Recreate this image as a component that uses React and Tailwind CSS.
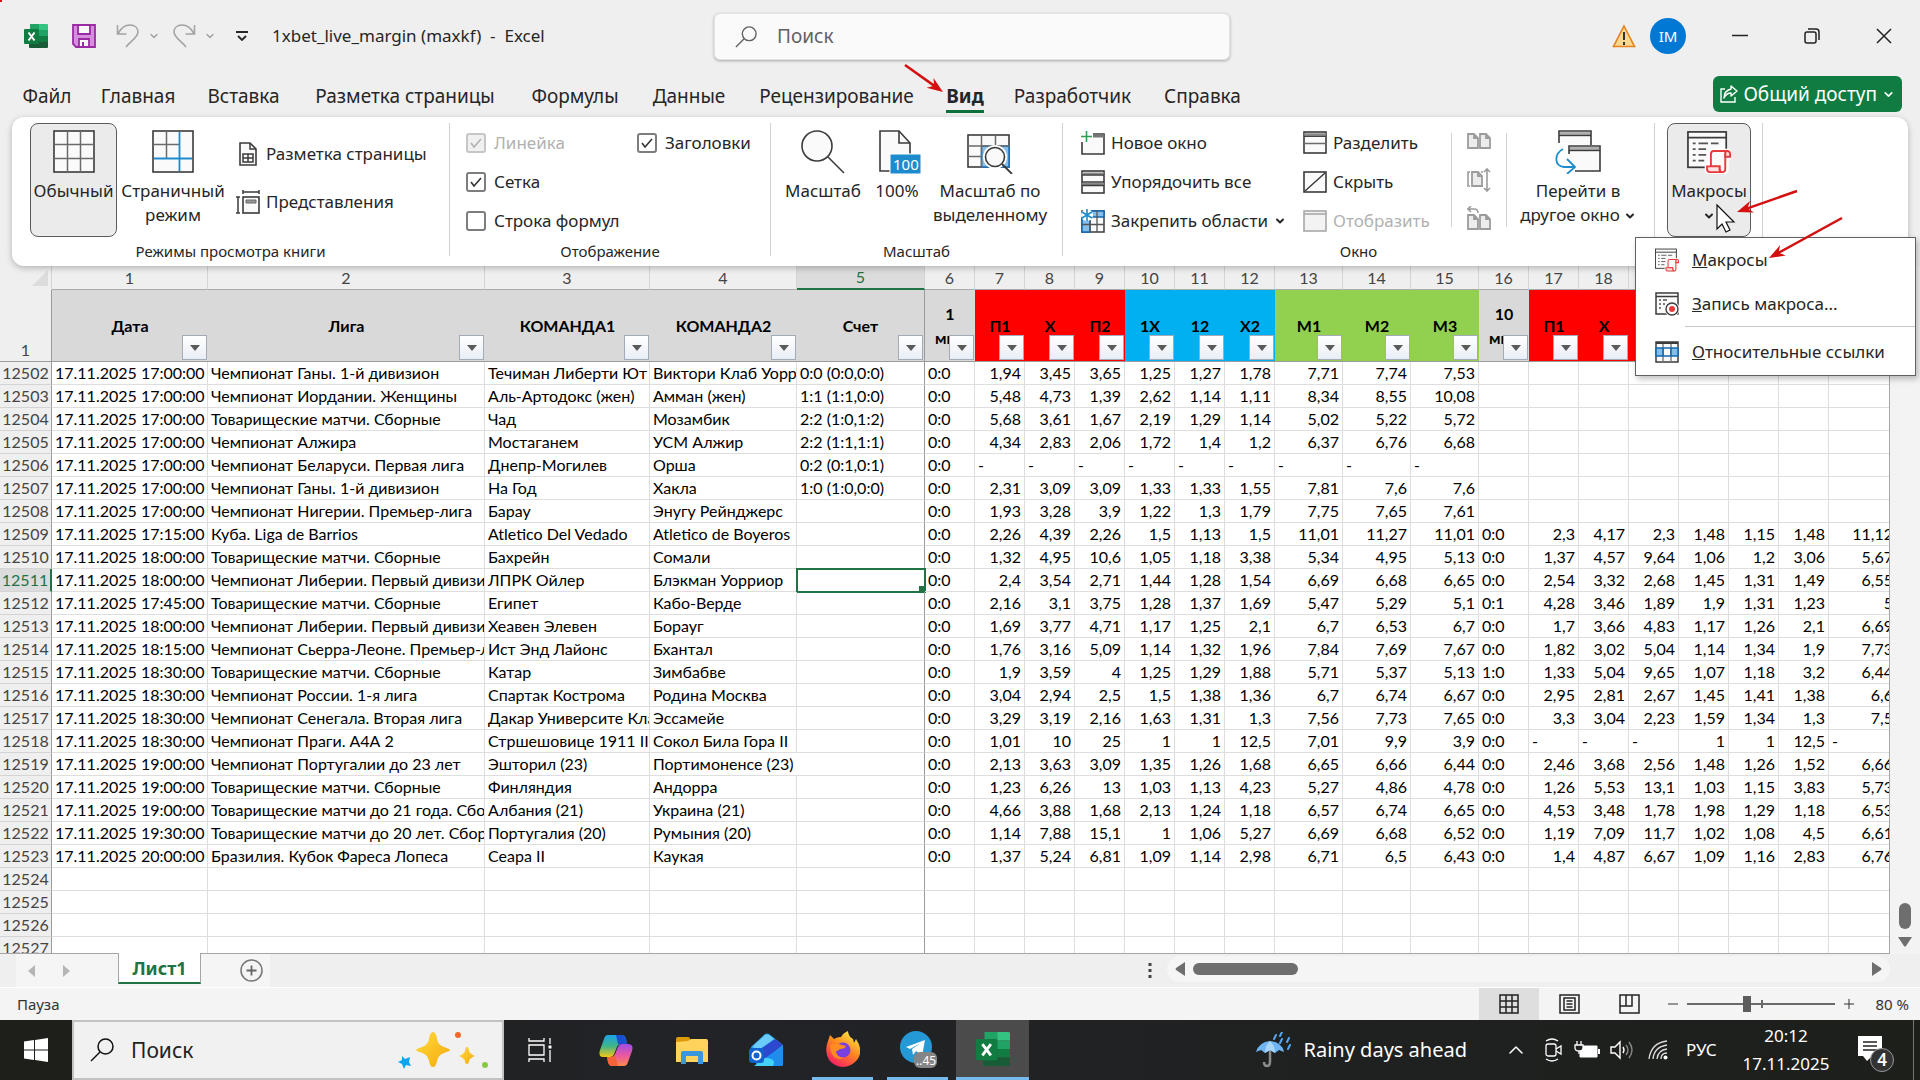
import React, { useState } from "react";
import { ChevronDown, ChevronUp, Minus, Plus } from "lucide-react";

const TABS = ["Файл", "Главная", "Вставка", "Разметка страницы", "Формулы", "Данные", "Рецензирование", "Вид", "Разработчик", "Справка"]

const COLS = [156, 277, 165, 147, 128, 50, 50, 50, 50, 50, 50, 50, 68, 68, 68, 50, 50, 50, 50, 50, 50, 50, 68]

const GREY = "bg-[#d9d9d9]"
const RED = "bg-[#ff0000]"
const BLUE = "bg-[#00b0f0]"
const LIME = "bg-[#92d050]"

const HEADERS = [
  ["Дата", GREY], ["Лига", GREY], ["КОМАНДА1", GREY], ["КОМАНДА2", GREY], ["Счет", GREY], ["1 мин", GREY],
  ["П1", RED], ["X", RED], ["П2", RED], ["1X", BLUE], ["12", BLUE], ["X2", BLUE],
  ["М1", LIME], ["М2", LIME], ["М3", LIME], ["10 мин", GREY],
  ["П1", RED], ["X", RED], ["П2", RED], ["1X", BLUE], ["12", BLUE], ["X2", BLUE], ["М1", LIME],
]

const FIRST_ROW = 12502
const ACTIVE_ROW = 12511

const DATA = `17:00:00|Чемпионат Ганы. 1-й дивизион|Течиман Либерти Ют|Виктори Клаб Уорриорз|0:0 (0:0,0:0)|0:0|1,94|3,45|3,65|1,25|1,27|1,78|7,71|7,74|7,53
17:00:00|Чемпионат Иордании. Женщины|Аль-Артодокс (жен)|Амман (жен)|1:1 (1:1,0:0)|0:0|5,48|4,73|1,39|2,62|1,14|1,11|8,34|8,55|10,08
17:00:00|Товарищеские матчи. Сборные|Чад|Мозамбик|2:2 (1:0,1:2)|0:0|5,68|3,61|1,67|2,19|1,29|1,14|5,02|5,22|5,72
17:00:00|Чемпионат Алжира|Мостаганем|УСМ Алжир|2:2 (1:1,1:1)|0:0|4,34|2,83|2,06|1,72|1,4|1,2|6,37|6,76|6,68
17:00:00|Чемпионат Беларуси. Первая лига|Днепр-Могилев|Орша|0:2 (0:1,0:1)|0:0|-|-|-|-|-|-|-|-|-
17:00:00|Чемпионат Ганы. 1-й дивизион|На Год|Хакла|1:0 (1:0,0:0)|0:0|2,31|3,09|3,09|1,33|1,33|1,55|7,81|7,6|7,6
17:00:00|Чемпионат Нигерии. Премьер-лига|Барау|Энугу Рейнджерс||0:0|1,93|3,28|3,9|1,22|1,3|1,79|7,75|7,65|7,61
17:15:00|Куба. Liga de Barrios|Atletico Del Vedado|Atletico de Boyeros||0:0|2,26|4,39|2,26|1,5|1,13|1,5|11,01|11,27|11,01|0:0|2,3|4,17|2,3|1,48|1,15|1,48|11,12
18:00:00|Товарищеские матчи. Сборные|Бахрейн|Сомали||0:0|1,32|4,95|10,6|1,05|1,18|3,38|5,34|4,95|5,13|0:0|1,37|4,57|9,64|1,06|1,2|3,06|5,67
18:00:00|Чемпионат Либерии. Первый дивизион|ЛПРК Ойлер|Блэкман Уорриор||0:0|2,4|3,54|2,71|1,44|1,28|1,54|6,69|6,68|6,65|0:0|2,54|3,32|2,68|1,45|1,31|1,49|6,55
17:45:00|Товарищеские матчи. Сборные|Египет|Кабо-Верде||0:0|2,16|3,1|3,75|1,28|1,37|1,69|5,47|5,29|5,1|0:1|4,28|3,46|1,89|1,9|1,31|1,23|5
18:00:00|Чемпионат Либерии. Первый дивизион|Хеавен Элевен|Борауг||0:0|1,69|3,77|4,71|1,17|1,25|2,1|6,7|6,53|6,7|0:0|1,7|3,66|4,83|1,17|1,26|2,1|6,69
18:15:00|Чемпионат Сьерра-Леоне. Премьер-лига|Ист Энд Лайонс|Бхантал||0:0|1,76|3,16|5,09|1,14|1,32|1,96|7,84|7,69|7,67|0:0|1,82|3,02|5,04|1,14|1,34|1,9|7,73
18:30:00|Товарищеские матчи. Сборные|Катар|Зимбабве||0:0|1,9|3,59|4|1,25|1,29|1,88|5,71|5,37|5,13|1:0|1,33|5,04|9,65|1,07|1,18|3,2|6,44
18:30:00|Чемпионат России. 1-я лига|Спартак Кострома|Родина Москва||0:0|3,04|2,94|2,5|1,5|1,38|1,36|6,7|6,74|6,67|0:0|2,95|2,81|2,67|1,45|1,41|1,38|6,6
18:30:00|Чемпионат Сенегала. Вторая лига|Дакар Университе Клаб|Эссамейе||0:0|3,29|3,19|2,16|1,63|1,31|1,3|7,56|7,73|7,65|0:0|3,3|3,04|2,23|1,59|1,34|1,3|7,5
18:30:00|Чемпионат Праги. А4А 2|Стршешовице 1911 II|Сокол Била Гора II||0:0|1,01|10|25|1|1|12,5|7,01|9,9|3,9|0:0|-|-|-|1|1|12,5|-
19:00:00|Чемпионат Португалии до 23 лет|Эшторил (23)|Портимоненсе (23)||0:0|2,13|3,63|3,09|1,35|1,26|1,68|6,65|6,66|6,44|0:0|2,46|3,68|2,56|1,48|1,26|1,52|6,66
19:00:00|Товарищеские матчи. Сборные|Финляндия|Андорра||0:0|1,23|6,26|13|1,03|1,13|4,23|5,27|4,86|4,78|0:0|1,26|5,53|13,1|1,03|1,15|3,83|5,73
19:00:00|Товарищеские матчи до 21 года. Сборные|Албания (21)|Украина (21)||0:0|4,66|3,88|1,68|2,13|1,24|1,18|6,57|6,74|6,65|0:0|4,53|3,48|1,78|1,98|1,29|1,18|6,53
19:30:00|Товарищеские матчи до 20 лет. Сборные|Португалия (20)|Румыния (20)||0:0|1,14|7,88|15,1|1|1,06|5,27|6,69|6,68|6,52|0:0|1,19|7,09|11,7|1,02|1,08|4,5|6,61
20:00:00|Бразилия. Кубок Фареса Лопеса|Сеара II|Каукая||0:0|1,37|5,24|6,81|1,09|1,14|2,98|6,71|6,5|6,43|0:0|1,4|4,87|6,67|1,09|1,16|2,83|6,76`

const ROWS = DATA.split("\n").map((line) => ("17.11.2025 " + line).split("|"))
const EMPTY_ROWS = [[], [], [], []]

const Svg = ({ w, h, children, className = "" }) => (
  <svg width={w} height={h} viewBox={`0 0 ${w} ${h}`} fill="none" className={`shrink-0 ${className}`} aria-hidden="true">
    {children}
  </svg>
)

function ExcelLogo({ size }) {
  return (
    <svg width={size} height={size} viewBox="0 0 24 24" className="shrink-0" aria-hidden="true">
      <path d="M6 0h9v6H6z" fill="#21a366" />
      <path d="M15 0h8a1 1 0 0 1 1 1v5h-9z" fill="#33c481" />
      <path d="M5 6h10v6H5z" fill="#107c41" />
      <path d="M15 6h9v6h-9z" fill="#21a366" />
      <path d="M5 12h10v6H5z" fill="#185c37" />
      <path d="M15 12h9v6h-9z" fill="#107c41" />
      <path d="M5 18h19v5a1 1 0 0 1-1 1H6a1 1 0 0 1-1-1z" fill="#185c37" />
      <rect x="0" y="5" width="15" height="15" rx="1" fill="#107c41" />
      <path d="M4.500 8.500l6 8M10.500 8.500l-6 8" stroke="#fff" strokeWidth="2" />
    </svg>
  )
}

const SearchIcon = ({ size, stroke }) => (
  <svg width={size} height={size} viewBox="0 0 24 24" fill="none" stroke={stroke} strokeWidth="1.500" className="shrink-0" aria-hidden="true">
    <circle cx="15.500" cy="8.500" r="7.500" />
    <path d="M10 14L1 23" />
  </svg>
)

function TitleBar() {
  return (
    <header className="flex h-[74px] items-start justify-between">
      <div className="flex h-[72px] flex-1 items-center pl-6">
        <ExcelLogo size={24} />
        <button aria-label="Сохранить" className="ml-6">
          <Svg w={24} h={24}>
            <path d="M1 1h22v22H4l-3-3z" fill="#d58fdc" stroke="#9a2ba5" strokeWidth="1.800" />
            <path d="M6 1h12v9H6zM7 15h10v8H7z" fill="#fafafa" stroke="#9a2ba5" strokeWidth="1.800" />
            <path d="M11 18v5" stroke="#9a2ba5" strokeWidth="2" />
          </Svg>
        </button>
        <button aria-label="Отменить" className="ml-5 flex items-center gap-2 text-[#a3a3a3]">
          <Svg w={24} h={24}>
            <path d="M1.500 1v9h9M2 9.500C5 4 9 1 14 1c5 0 8 3 8 7 0 5-6 8-12 15" stroke="currentColor" strokeWidth="1.600" />
          </Svg>
          <ChevronDown size={12} strokeWidth={3} />
        </button>
        <button aria-label="Вернуть" className="ml-3 flex items-center gap-2 text-[#a3a3a3]">
          <Svg w={24} h={24}>
            <path d="M22.500 1v9h-9M22 9.500C19 4 15 1 10 1 5 1 2 4 2 8c0 5 6 8 12 15" stroke="currentColor" strokeWidth="1.600" />
          </Svg>
          <ChevronDown size={12} strokeWidth={3} />
        </button>
        <button aria-label="Настройка панели" className="ml-5">
          <Svg w={12} h={10}>
            <path d="M0 1h12M2 5l4 4 4-4" stroke="#262626" strokeWidth="1.800" />
          </Svg>
        </button>
        <h1 className="ml-6 whitespace-pre text-[17px] text-[#262626]">1xbet_live_margin (maxkf)  -  Excel</h1>
      </div>
      <label className="ml-7 mt-[13px] flex h-[47px] w-[516px] items-center gap-5 rounded-md border border-[#e2e2e2] bg-[#fafafa] px-5 shadow-[0_1px_3px_rgba(0,0,0,0.3)]">
        <SearchIcon size={22} stroke="#616161" />
        <input aria-label="Поиск" placeholder="Поиск" className="flex-1 bg-transparent text-[19px] outline-none placeholder:text-[#616161]" />
      </label>
      <div className="flex h-[72px] flex-1 items-center justify-end pr-7">
        <Svg w={24} h={24}>
          <path d="M12 2l10.500 20.500h-21z" fill="#fbd88f" stroke="#e8821e" strokeWidth="1.600" />
          <path d="M12 8v8M12 18v3" stroke="#333" strokeWidth="2" />
        </Svg>
        <button className="ml-[14px] h-9 w-9 rounded-full bg-[#0078d4] text-[15px] text-white">IM</button>
        <button aria-label="Свернуть" className="ml-[46px]">
          <Svg w={16} h={16}><path d="M0 7.500h16" stroke="#222" strokeWidth="1.500" /></Svg>
        </button>
        <button aria-label="Восстановить" className="ml-14">
          <Svg w={16} h={16}>
            <rect x="1" y="4" width="11" height="11" rx="2" stroke="#222" strokeWidth="1.500" />
            <path d="M4 1h8a3 3 0 0 1 3 3v8" stroke="#222" strokeWidth="1.500" />
          </Svg>
        </button>
        <button aria-label="Закрыть" className="ml-14">
          <Svg w={16} h={16}><path d="M1 1l14 14M15 1L1 15" stroke="#222" strokeWidth="1.500" /></Svg>
        </button>
      </div>
    </header>
  )
}

function Arrow({ w, h, x1, y1, x2, y2, className }) {
  const a = Math.atan2(y2 - y1, x2 - x1)
  const pt = (d, s) => `${x2 - d * Math.cos(a + s)},${y2 - d * Math.sin(a + s)}`
  return (
    <svg width={w} height={h} className={`pointer-events-none absolute z-30 ${className}`} aria-hidden="true">
      <line x1={x1} y1={y1} x2={x2 - 8 * Math.cos(a)} y2={y2 - 8 * Math.sin(a)} stroke="#d40f0f" strokeWidth="2.500" />
      <polygon points={`${x2},${y2} ${pt(17, 0.36)} ${pt(11, 0)} ${pt(17, -0.36)}`} fill="#d40f0f" />
    </svg>
  )
}

function MenuTabs() {
  return (
    <nav className="flex h-[43px] items-start justify-between pl-[7px] pr-[18px]">
      <div className="grid grid-cols-[80px_102px_109px_214px_126px_102px_193px_64px_151px_109px] text-[19px] text-[#262626]">
        {TABS.map((tab) => (
          <button key={tab} className="relative flex justify-center whitespace-nowrap pt-2 leading-7">
            {tab === "Вид" ? (
              <>
                <span className="border-b-[3px] border-[#0f703b] font-bold">{tab}</span>
                <Arrow w={44} h={34} x1={4} y1={3} x2={42} y2={30} className="-left-8 -top-3" />
              </>
            ) : tab}
          </button>
        ))}
      </div>
      <button className="mt-[2px] flex h-9 items-center gap-[5px] rounded-md bg-[#107c41] px-[7px] text-[19px] text-white">
        <Svg w={18} h={18}>
          <path d="M5 4H1v13h14v-5" stroke="#fff" strokeWidth="1.400" />
          <path d="M11 1l6 5-6 5V8C8 8 6 9 4 13c0-5 3-8 7-9z" stroke="#fff" strokeWidth="1.400" strokeLinejoin="round" />
        </Svg>
        Общий доступ
        <ChevronDown size={13} strokeWidth={3} />
      </button>
    </nav>
  )
}

const LINE = "#3b3b3b"

const NormalIcon = () => (
  <Svg w={44} h={44}>
    <rect x="2" y="1" width="40" height="41" fill="#fafafa" stroke={LINE} strokeWidth="1.600" />
    <path d="M15.500 1v41M28.500 1v41M2 14.500h40M2 28.500h40" stroke="#6b6b6b" strokeWidth="1.500" />
  </Svg>
)

const PageBreakIcon = () => (
  <Svg w={44} h={44}>
    <rect x="2" y="1" width="40" height="41" fill="#fafafa" stroke={LINE} strokeWidth="1.600" />
    <path d="M15.500 1v27M2 14.500h26" stroke="#6b6b6b" strokeWidth="1.500" />
    <path d="M28.500 2v39M3 28.500h38" stroke="#1e8bcd" strokeWidth="1.800" />
  </Svg>
)

const PageLayoutIcon = () => (
  <Svg w={24} h={24}>
    <path d="M4 1h10l6 6v16H4z" fill="#fafafa" stroke={LINE} strokeWidth="1.600" />
    <path d="M14 1v6h6M7 12h10v8H7zM12 12v8M7 16h10" stroke={LINE} strokeWidth="1.500" />
  </Svg>
)

const CustomViewsIcon = () => (
  <Svg w={24} h={24}>
    <rect x="7" y="7" width="16" height="16" fill="#fafafa" stroke={LINE} strokeWidth="1.600" />
    <path d="M10 10h10v3H10z" fill="#999" stroke="#666" />
    <path d="M7 2h16M7 0v4M23 0v4M2 7v16M0 7h4M0 23h4" stroke={LINE} strokeWidth="1.500" />
  </Svg>
)

const ZoomIcon = () => (
  <Svg w={44} h={44}>
    <circle cx="16" cy="16" r="15" fill="#fafafa" stroke={LINE} strokeWidth="1.600" />
    <path d="M27 27l16 16" stroke={LINE} strokeWidth="1.600" />
  </Svg>
)

const Zoom100Icon = () => (
  <Svg w={44} h={44} className="ml-1">
    <path d="M3 1h19l11 12v28H3z" fill="#fafafa" stroke={LINE} strokeWidth="1.600" />
    <path d="M22 1v12h11" stroke={LINE} strokeWidth="1.600" />
    <rect x="13" y="24" width="31" height="20" fill="#1e8bcd" stroke="#fff" />
    <text x="16" y="40" fontSize="15" fill="#fff">100</text>
  </Svg>
)

const ZoomSelectionIcon = () => (
  <Svg w={46} h={44}>
    <rect x="1" y="5" width="41" height="32" fill="#fafafa" stroke={LINE} strokeWidth="1.600" />
    <path d="M14.500 16H42v21H14.500z" fill="#83beec" stroke="#1e6fb8" strokeWidth="1.500" />
    <path d="M14.500 5v32M28.500 5v11M1 16h41M1 26.500h14" stroke="#6b6b6b" strokeWidth="1.500" />
    <circle cx="28" cy="27" r="12" fill="#fff" />
    <circle cx="28" cy="27" r="9.500" fill="#fafafa" stroke={LINE} strokeWidth="1.600" />
    <path d="M35 34l10 10" stroke={LINE} strokeWidth="1.800" />
  </Svg>
)

const NewWindowIcon = () => (
  <Svg w={24} h={24}>
    <path d="M12 3h11v20H1V11" fill="#fafafa" stroke={LINE} strokeWidth="1.600" />
    <path d="M12 5h11" stroke="#777" strokeWidth="3" />
    <path d="M5.500 0v11M0 5.500h11" stroke="#2f9e52" strokeWidth="1.600" />
  </Svg>
)

const ArrangeIcon = () => (
  <Svg w={24} h={24}>
    <rect x="1" y="1" width="22" height="22" fill="#fafafa" stroke={LINE} strokeWidth="1.600" />
    <path d="M1 3.500h22M1 14h22" stroke="#8a8a8a" strokeWidth="2" />
    <path d="M1 5h22M1 12h22M1 15.500h22" stroke={LINE} strokeWidth="1.300" />
  </Svg>
)

const FreezeIcon = () => (
  <Svg w={24} h={24}>
    <rect x="1" y="2" width="22" height="21" fill="#fafafa" stroke={LINE} strokeWidth="1.500" />
    <path d="M9 2h14v6H9zM1 9h8v14H1z" fill="#83beec" stroke="#1268b3" strokeWidth="1.500" />
    <path d="M16 2v21M9 15.500h14M1 15.500h8M9 8v15" stroke="#555" strokeWidth="1.300" />
    <circle cx="6" cy="6" r="6" fill="#fff" />
    <path d="M6 0v12M1 3l10 6M11 3L1 9" stroke="#1e8bcd" strokeWidth="1.600" />
  </Svg>
)

const SplitIcon = () => (
  <Svg w={24} h={24}>
    <rect x="1" y="1" width="22" height="21" fill="#fafafa" stroke={LINE} strokeWidth="1.600" />
    <path d="M1 3.500h22" stroke="#8a8a8a" strokeWidth="2.500" />
    <path d="M1 5.300h22" stroke={LINE} strokeWidth="1.300" />
    <path d="M1 12.500h22" stroke="#6b6b6b" strokeWidth="1.500" />
  </Svg>
)

const HideIcon = () => (
  <Svg w={24} h={24}>
    <rect x="1" y="2" width="22" height="20" fill="#fafafa" stroke={LINE} strokeWidth="1.600" />
    <path d="M2 21L22 3" stroke={LINE} strokeWidth="1.500" />
  </Svg>
)

const UnhideIcon = () => (
  <Svg w={24} h={24}>
    <rect x="1" y="2" width="22" height="20" fill="#f3f3f3" stroke="#a8a8a8" strokeWidth="1.600" />
    <path d="M1 5h22" stroke="#a8a8a8" strokeWidth="1.600" />
  </Svg>
)

const PAGES = "M1 1h6l4 4v10H1zM7 1v4h4M13 1h6l4 4v10H13zM19 1v4h4"

const SideBySideIcon = () => (
  <Svg w={24} h={24}>
    <path d={PAGES} transform="translate(0 3)" fill="#ececec" stroke="#9c9c9c" strokeWidth="1.800" />
  </Svg>
)

const SyncScrollIcon = () => (
  <Svg w={24} h={24}>
    <path d="M3 4H1v14h2M14 4h2M14 18h2" stroke="#9c9c9c" strokeWidth="1.600" />
    <path d="M5 4h6l4 4v10H5zM11 4v4h4" fill="#ececec" stroke="#9c9c9c" strokeWidth="1.800" />
    <path d="M20 1v22M17 4l3-3 3 3M17 20l3 3 3-3" stroke="#9c9c9c" strokeWidth="1.600" />
  </Svg>
)

const ResetPositionIcon = () => (
  <Svg w={24} h={24}>
    <path d={PAGES} transform="translate(0 8)" fill="#ececec" stroke="#9c9c9c" strokeWidth="1.800" />
    <path d="M4 0L1 3l3 3M1 3h6q4 0 4 4" stroke="#9c9c9c" strokeWidth="1.600" />
  </Svg>
)

const SwitchWindowIcon = () => (
  <Svg w={46} h={44}>
    <path d="M4 13V1h32v14" fill="#fafafa" stroke={LINE} strokeWidth="1.600" />
    <path d="M5 3.500h30" stroke="#b0b0b0" strokeWidth="3" />
    <path d="M4 5.500h32" stroke={LINE} strokeWidth="1.400" />
    <path d="M14 24v-8h31v25H20" fill="#fafafa" stroke={LINE} strokeWidth="1.600" />
    <path d="M15 18.500h29" stroke="#b0b0b0" strokeWidth="3" />
    <path d="M14 20.500h31" stroke={LINE} strokeWidth="1.400" />
    <path d="M8 19C-1 24-1 36 9 37h10M12 29l8 8-8 7" stroke="#1e8bcd" strokeWidth="1.800" />
  </Svg>
)

const MacroIcon = ({ size = 44 }) => (
  <svg width={size} height={size} viewBox="0 0 46 46" fill="none" className="shrink-0" aria-hidden="true">
    <rect x="1" y="2" width="40" height="37" fill="#fafafa" stroke={LINE} strokeWidth="1.800" />
    <path d="M1 8h40" stroke={LINE} strokeWidth="1.800" />
    <path d="M6 14h3M12 14h10M25 14h8M6 20h3M12 20h8M6 26h3M12 26h8M6 32h3M12 32h6" stroke="#555" strokeWidth="1.700" />
    <path d="M25 38V25q0-3 3-3h14q3 0 3 3v4h-4v12q0 3-3 3H24q-3 0-3-3v-3h13" fill="#fff" stroke="#fff" strokeWidth="5" />
    <path d="M25 38V25q0-3 3-3h14q-2 1-2 4v15q0 3-3 3-3 0-3-3v-3z" fill="#fafafa" stroke="#e8393b" strokeWidth="2" />
    <path d="M40 28h5v-3q0-3-3-3-2 0-2 3zM34 38H21v3q0 3 3 3h13q-3 0-3-3z" fill="#fbe3e3" stroke="#e8393b" strokeWidth="2" />
  </svg>
)

const RecordMacroIcon = () => (
  <Svg w={24} h={24}>
    <path d="M1 1h22v21H1z" fill="#fafafa" stroke={LINE} strokeWidth="1.500" />
    <path d="M1 4.500h22" stroke={LINE} strokeWidth="1.500" />
    <path d="M4 8h2M8 8h4M4 12h2M8 12h2M4 16h2" stroke="#555" strokeWidth="1.300" />
    <circle cx="17" cy="17" r="7.500" fill="#fff" />
    <circle cx="17" cy="17" r="6" fill="#fff" stroke={LINE} strokeWidth="1.400" />
    <circle cx="17" cy="17" r="3" fill="#e8393b" />
  </Svg>
)

const RelativeIcon = () => (
  <Svg w={24} h={24}>
    <rect x="1" y="2" width="22" height="20" fill="#fafafa" stroke={LINE} strokeWidth="1.500" />
    <path d="M8 2v20M16 2v20" stroke="#777" strokeWidth="1.400" />
    <path d="M1 8h7v8H1zM16 8h7v8h-7z" fill="#83beec" />
    <path d="M1 8h22M1 16h22M1 8v8M8 8v8M16 8v8M23 8v8" stroke="#1268b3" strokeWidth="1.600" />
    <path d="M1 3h22" stroke={LINE} strokeWidth="2" />
  </Svg>
)

function Group({ label, width, children }) {
  return (
    <section className={`flex flex-col ${width}`}>
      <div className="flex h-[114px]">{children}</div>
      <h2 className="text-center text-[15px] leading-7">{label}</h2>
    </section>
  )
}

const Divider = () => <div className="h-[133px] w-px bg-[#d2d2d2]" />

function BigButton({ icon, lines, width, active, chevron }) {
  return (
    <button className={`flex h-[114px] flex-col items-center whitespace-nowrap pt-1.5 ${width} ${active ? "rounded-lg border border-[#5c5c5c] bg-[#ebebeb]" : "border border-transparent"}`}>
      {icon}
      <span className="mt-[5px] text-[17px] leading-6">
        {lines[0]}<br />{lines[1]}
        {chevron && <ChevronDown size={12} strokeWidth={4} className={`inline-block align-middle ${lines[1] ? "ml-1" : ""}`} />}
      </span>
    </button>
  )
}

function SmallButton({ icon, text, disabled, chevron, height = "h-[39px]" }) {
  return (
    <button disabled={disabled} className={`flex items-center gap-1.5 whitespace-nowrap text-[17px] ${height} ${disabled ? "text-[#b1b1b1]" : ""}`}>
      {icon}
      {text}
      {chevron && <ChevronDown size={12} strokeWidth={4} />}
    </button>
  )
}

function Tick({ label, checked, disabled }) {
  const [on, setOn] = useState(checked)
  return (
    <label className={`flex h-[39px] items-center gap-2 whitespace-nowrap text-[17px] ${disabled ? "text-[#b1b1b1]" : ""}`}>
      <span className="grid place-items-center">
        <input
          type="checkbox"
          checked={on}
          disabled={disabled}
          onChange={() => setOn(!on)}
          className="col-start-1 row-start-1 h-5 w-5 appearance-none rounded-[3px] border-2 border-[#7d7d7d] bg-white disabled:border-[#c6c6c6] disabled:bg-[#f0f0f0]"
        />
        {on && (
          <Svg w={12} h={10} className="pointer-events-none col-start-1 row-start-1">
            <path d="M1 5l3 4 7-8" stroke={disabled ? "#b1b1b1" : "#333"} strokeWidth="1.600" />
          </Svg>
        )}
      </span>
      {label}
    </label>
  )
}

function MacroMenu() {
  const item = "flex h-11 w-full items-center gap-[13px] whitespace-nowrap pl-[19px] text-[17px]"
  return (
    <div className="absolute -left-8 top-[114px] z-20 w-[281px] border border-[#616161] bg-white pb-px shadow-[2px_3px_6px_rgba(0,0,0,0.25)]">
      <button className={item}><MacroIcon size={24} /><span><u>М</u>акросы</span></button>
      <button className={item}><RecordMacroIcon /><span><u>З</u>апись макроса...</span></button>
      <hr className="ml-[49px] border-[#c8c8c8]" />
      <button className={`${item} mt-[3px]`}><RelativeIcon /><span><u>О</u>тносительные ссылки</span></button>
      <Arrow w={84} h={52} x1={77} y1={4} x2={4} y2={44} className="left-[129px] -top-6" />
    </div>
  )
}

function Ribbon() {
  return (
    <div className="relative z-10 mx-3 flex h-[149px] rounded-xl bg-white pt-1.5 text-[#262626] shadow-[0_2px_6px_rgba(0,0,0,0.25)]">
      <Group label="Режимы просмотра книги" width="w-[437px]">
        <BigButton icon={<NormalIcon />} lines={["Обычный"]} width="ml-[18px] w-[87px]" active />
        <BigButton icon={<PageBreakIcon />} lines={["Страничный", "режим"]} width="ml-1 w-[104px]" />
        <div className="ml-[11px] pt-[7px]">
          <SmallButton icon={<PageLayoutIcon />} text="Разметка страницы" height="h-12" />
          <SmallButton icon={<CustomViewsIcon />} text="Представления" height="h-12" />
        </div>
      </Group>
      <Divider />
      <Group label="Отображение" width="w-[320px]">
        <div className="w-[187px] pl-4">
          <Tick label="Линейка" checked disabled />
          <Tick label="Сетка" checked />
          <Tick label="Строка формул" checked={false} />
        </div>
        <div><Tick label="Заголовки" checked /></div>
      </Group>
      <Divider />
      <Group label="Масштаб" width="w-[291px]">
        <div className="flex gap-[7px] pl-3">
          <BigButton icon={<ZoomIcon />} lines={["Масштаб"]} width="w-20" />
          <BigButton icon={<Zoom100Icon />} lines={["100%"]} width="w-[54px]" />
          <BigButton icon={<ZoomSelectionIcon />} lines={["Масштаб по", "выделенному"]} width="w-[118px]" />
        </div>
      </Group>
      <Divider />
      <Group label="Окно" width="w-[591px]">
        <div className="w-[240px] pl-[18px]">
          <SmallButton icon={<NewWindowIcon />} text="Новое окно" />
          <SmallButton icon={<ArrangeIcon />} text="Упорядочить все" />
          <SmallButton icon={<FreezeIcon />} text="Закрепить области" chevron />
        </div>
        <div className="w-[148px]">
          <SmallButton icon={<SplitIcon />} text="Разделить" />
          <SmallButton icon={<HideIcon />} text="Скрыть" />
          <SmallButton icon={<UnhideIcon />} text="Отобразить" disabled />
        </div>
        <div className="mt-[10px] h-[94px] w-px bg-[#d2d2d2]" />
        <div className="flex w-[54px] flex-col items-center">
          <button aria-label="Рядом" className="h-[39px]"><SideBySideIcon /></button>
          <button aria-label="Синхронная прокрутка" className="h-[39px]"><SyncScrollIcon /></button>
          <button aria-label="Восстановить расположение" className="h-[39px]"><ResetPositionIcon /></button>
        </div>
        <div className="mt-[10px] h-[94px] w-px bg-[#d2d2d2]" />
        <BigButton icon={<SwitchWindowIcon />} lines={["Перейти в", "другое окно"]} width="ml-1.5 w-[130px]" chevron />
      </Group>
      <Divider />
      <div className="w-[107px] pl-3">
        <div className="relative w-[84px]">
          <BigButton icon={<MacroIcon />} lines={["Макросы", ""]} width="w-[84px]" active chevron />
          <Svg w={20} h={30} className="pointer-events-none absolute left-[49px] top-20 z-30">
            <path d="M1 2v24l5-5 4 8 4-2-4-8h8z" fill="#fff" stroke="#111" strokeWidth="1.200" />
          </Svg>
          <Arrow w={68} h={30} x1={63} y1={4} x2={3} y2={25} className="left-[67px] top-16" />
          <MacroMenu />
        </div>
      </div>
      <Divider />
    </div>
  )
}

function HeaderCell({ text, color, last, frozen }) {
  return (
    <th className={`relative h-[72px] overflow-hidden border-b border-[#9b9b9b] p-0 ${color} ${frozen ? "border-r" : ""}`}>
      <div className={`text-center leading-6 ${last ? "px-2" : "px-1"}`}>{text}</div>
      <button aria-label={`Фильтр ${text}`} className="absolute bottom-px right-px flex h-[25px] w-[25px] items-center justify-center border border-[#a3aab8] bg-gradient-to-b from-white to-[#e9eef6]">
        <Svg w={10} h={6}><path d="M0 0h10L5 6z" fill="#5a5a5a" /></Svg>
      </button>
    </th>
  )
}

function DataCell({ value, col, row, cells }) {
  const left = col < 6 || col === 15 || value === "-"
  const spills = col === 3 && cells[3] && !cells[4]
  const longName = spills && value.length > 15 && value.endsWith(")")
  const active = row === ACTIVE_ROW && col === 4
  return (
    <td className={`relative h-[23px] whitespace-nowrap border-b border-b-[#dedede] px-[3px] py-0 leading-[22px] ${left ? "text-left" : "text-right"} ${spills ? "overflow-visible" : "overflow-hidden"} ${longName ? "" : "border-r"} ${col === 4 ? "border-r-[#9b9b9b]" : "border-r-[#dedede]"} ${active ? "outline-2 -outline-offset-1 outline-[#217346]" : ""}`}>
      {value}
      {active && <span className="absolute bottom-0 right-0 h-[5px] w-[5px] bg-[#217346]" />}
    </td>
  )
}

function Sheet() {
  const rows = [...ROWS, ...EMPTY_ROWS]
  return (
    <div className="flex min-h-0 flex-1">
      <div className="min-w-0 flex-1 overflow-hidden border-b border-r border-[#a6a6a6] bg-white">
        <table className="w-[1897px] table-fixed border-separate border-spacing-0 font-['Lato','Noto_Sans',sans-serif] text-[16px] text-black">
          <colgroup>
            <col className="w-[52px]" />
            {COLS.map((w, i) => <col key={i} style={{ width: w }} />)}
          </colgroup>
          <thead>
            <tr className="bg-[#efefef] font-normal text-[#444]">
              <th className="h-[23px] border-r border-[#d4d4d4] p-0">
                <Svg w={16} h={16} className="ml-auto mr-[3px]"><path d="M16 0v16H0z" fill="#dcdcdc" /></Svg>
              </th>
              {COLS.map((_, i) => (
                <th key={i} className={`h-[23px] border-r border-r-[#d4d4d4] p-0 font-normal leading-[22px] ${i === 4 ? "border-b-2 border-b-[#217346] bg-[#dcdcdc] text-[#217346]" : "border-b border-b-[#ababab]"}`}>{i + 1}</th>
              ))}
            </tr>
            <tr>
              <th className="border-b border-r border-[#9b9b9b] bg-[#efefef] p-0 align-bottom font-normal leading-[22px] text-[#444]">1</th>
              {HEADERS.map(([text, color], i) => (
                <HeaderCell key={i} text={text} color={color} last={text.includes(" ")} frozen={i === 4} />
              ))}
            </tr>
          </thead>
          <tbody>
            {rows.map((cells, r) => {
              const n = FIRST_ROW + r
              return (
                <tr key={n}>
                  <th className={`h-[23px] border-b border-b-[#d4d4d4] p-0 font-normal leading-[22px] ${n === ACTIVE_ROW ? "border-r-2 border-r-[#217346] bg-[#dcdcdc] text-[#217346]" : "border-r border-r-[#9b9b9b] bg-[#efefef] text-[#444]"}`}>{n}</th>
                  {COLS.map((_, c) => <DataCell key={c} value={cells[c] || ""} col={c} row={n} cells={cells} />)}
                </tr>
              )
            })}
          </tbody>
        </table>
      </div>
      <div className="flex w-[30px] flex-col items-center justify-end gap-2 bg-[#f3f3f3] pb-[7px]">
        <div className="h-[26px] w-3 rounded-full bg-[#6e6e6e]" />
        <Svg w={14} h={10}><path d="M0 0h14L8 9q-1 1-2 0z" fill="#6e6e6e" /></Svg>
      </div>
    </div>
  )
}

function SheetTabs() {
  return (
    <div className="flex h-[33px] items-start bg-[#efefef]">
      <div className="ml-4 flex h-full items-center bg-[#f5f5f5]">
        <button aria-label="Назад" className="ml-3"><Svg w={7} h={12}><path d="M7 0v12L0 6z" fill="#b5b5b5" /></Svg></button>
        <button aria-label="Вперед" className="ml-7"><Svg w={7} h={12}><path d="M0 0v12l7-6z" fill="#b5b5b5" /></Svg></button>
        <button className="-mt-1 ml-12 h-[31px] w-[83px] border-x border-b-2 border-x-[#a6a6a6] border-b-[#217346] bg-white text-[18px] font-bold leading-7 text-[#217346]">Лист1</button>
        <button aria-label="Новый лист" className="ml-[39px] mr-[7px]">
          <Svg w={23} h={23}>
            <circle cx="11.500" cy="11.500" r="10.500" stroke="#767676" strokeWidth="1.500" />
            <path d="M11.500 6.500v10M6.500 11.500h10" stroke="#666" strokeWidth="1.800" />
          </Svg>
        </button>
      </div>
      <div className="ml-auto mr-[15px] mt-[9px]">
        <Svg w={4} h={16}><path d="M.5 0h3v3h-3zM.5 6h3v3h-3zM.5 12h3v3h-3z" fill="#444" /></Svg>
      </div>
      <div className="mr-[30px] mt-[2px] flex h-[26px] w-[723px] items-center rounded-full bg-[#f5f5f5] px-2">
        <Svg w={10} h={14}><path d="M10 0v14L1 8q-1-1 0-2z" fill="#6e6e6e" /></Svg>
        <div className="ml-2 h-3 w-[105px] rounded-full bg-[#6e6e6e]" />
        <Svg w={10} h={14} className="ml-auto"><path d="M0 0v14l9-6q1-1 0-2z" fill="#6e6e6e" /></Svg>
      </div>
    </div>
  )
}

function StatusBar() {
  const [zoom, setZoom] = useState(40)
  return (
    <div className="flex h-[33px] items-center border-t border-white bg-[#f4f4f4] pl-[17px] pr-[11px] text-[15px] text-[#333]">
      <span className="mr-auto">Пауза</span>
      <button aria-label="Обычный" className="flex h-full w-[60px] items-center justify-center bg-[#dedede]">
        <Svg w={20} h={20}><path d="M1 1h18v18H1zM7 1v18M13 1v18M1 7h18M1 13h18" stroke="#222" strokeWidth="1.500" /></Svg>
      </button>
      <button aria-label="Разметка страницы" className="flex w-[60px] justify-center">
        <Svg w={21} h={20}><path d="M1 1h19v18H1zM5 4h11v12H5zM7.500 7h6M7.500 10h6M7.500 13h6" stroke="#222" strokeWidth="1.500" /></Svg>
      </button>
      <button aria-label="Страничный режим" className="flex w-[60px] justify-center">
        <Svg w={21} h={20}><path d="M1 1h19v18H1zM1 12h12V1M7 1v11" stroke="#222" strokeWidth="1.500" /></Svg>
      </button>
      <button aria-label="Уменьшить" className="ml-1.5"><Minus size={16} strokeWidth={1.5} /></button>
      <div className="relative mx-1.5 flex w-[148px] items-center">
        <input
          type="range"
          aria-label="Масштаб"
          value={zoom}
          onChange={(e) => setZoom(e.target.value)}
          className="h-5 w-full appearance-none bg-transparent [&::-webkit-slider-runnable-track]:h-[2px] [&::-webkit-slider-runnable-track]:bg-[#6a6a6a] [&::-webkit-slider-thumb]:-mt-[7px] [&::-webkit-slider-thumb]:h-4 [&::-webkit-slider-thumb]:w-2 [&::-webkit-slider-thumb]:appearance-none [&::-webkit-slider-thumb]:bg-[#5c5c5c]"
        />
        <span className="pointer-events-none absolute left-1/2 h-2 w-[2px] bg-[#6a6a6a]" />
      </div>
      <button aria-label="Увеличить"><Plus size={16} strokeWidth={1.5} /></button>
      <span className="ml-[18px] whitespace-nowrap text-[15px]">80 %</span>
    </div>
  )
}

const TASK = "flex h-full items-center justify-center"

function Taskbar() {
  return (
    <footer className="flex h-[60px] items-center bg-gradient-to-r from-[#1e1f1a] via-[#222327] via-35% to-[#1d1f1b] text-white">
      <button aria-label="Пуск" className={`${TASK} w-[72px]`}>
        <Svg w={24} h={24}><path d="M0 3.500l10-1.500v9.500H0zM11 1.900L24 0v11.500H11zM0 12.500h10V22L0 20.500zM11 12.500h13V24L11 22.100z" fill="#fff" /></Svg>
      </button>
      <label className="flex h-full w-[432px] items-center border-2 border-[#c2c2c2] bg-[#f1f1f1] pl-4 pr-3">
        <SearchIcon size={24} stroke="#111" />
        <input aria-label="Поиск в Windows" placeholder="Поиск" className="ml-[17px] min-w-0 flex-1 bg-transparent pt-[2px] text-[21px] outline-none placeholder:text-[#222]" />
        <Svg w={92} h={40}>
          <defs>
            <linearGradient id="star" x1="0" y1="0" x2="1" y2="1"><stop stopColor="#ffdc3c" /><stop offset="1" stopColor="#f5a80c" /></linearGradient>
          </defs>
          <path d="M35 2q3 0 4 7 1 6 7 8 6 2 6 3t-6 3q-6 2-7 8-1 6-4 6t-4-6q-1-6-7-8-6-2-6-3t6-3q6-2 7-8 1-7 4-7z" fill="url(#star)" />
          <path d="M69 17q2 0 2 4 1 3 6 5-5 2-6 5 0 3-2 3t-2-3q-1-3-6-5 5-2 6-5 0-4 2-4z" fill="url(#star)" />
          <path d="M4 26l3 3 5-2-1 5 2 4-5-1-2 4-2-5-4-2 4-2z" fill="#0aa5ef" />
          <circle cx="60" cy="5" r="3" fill="#f2672a" />
          <circle cx="87" cy="35" r="3" fill="#8ac83f" />
        </Svg>
      </label>
      <button aria-label="Представление задач" className={`${TASK} w-[72px]`}>
        <Svg w={24} h={24}>
          <path d="M1 0v3h15V0M1 7h15v10H1zM1 24v-3h15v3M22 0v6M22 12v12" stroke="#fff" strokeWidth="1.300" />
          <path d="M20.500 7.500h3v3h-3z" fill="#fff" />
        </Svg>
      </button>
      <button aria-label="Copilot" className={`${TASK} w-20`}>
        <svg width="34" height="31" viewBox="0 0 34 31" aria-hidden="true">
          <defs>
            <linearGradient id="cpa" x1="0" y1="0" x2="0" y2="1"><stop stopColor="#1aa4e8" /><stop offset=".5" stopColor="#3db489" /><stop offset="1" stopColor="#f7c716" /></linearGradient>
            <linearGradient id="cpb" x1="0" y1="0" x2="0" y2="1"><stop stopColor="#a04be8" /><stop offset=".55" stopColor="#ec5a9c" /><stop offset="1" stopColor="#fb8a4a" /></linearGradient>
          </defs>
          <path d="M9 0h14q3 0 4 4l1 5h-6q-3 0-4 3l-3 7q-1 3-4 3H4q-5 0-3-7L5 4q1-4 4-4z" fill="url(#cpa)" />
          <path d="M17 0h6q3 0 4 4l1 5h-6l-3 0z" fill="#1a4fd0" />
          <path d="M25 31H13q-3 0-4-4l-1-5h4q3 0 4-3l3-7q1-3 4-3h6q6 0 4 7l-4 11q-1 4-4 4z" fill="url(#cpb)" />
          <path d="M19 31h-6q-3 0-4-4l-1-5h4q3 0 4-3z" fill="#f4633a" />
        </svg>
      </button>
      <button aria-label="Проводник" className={`${TASK} w-[72px]`}>
        <Svg w={32} h={28}>
          <path d="M0 3q0-2 2-2h10q2 0 2 2v3H0z" fill="#dc9a08" />
          <path d="M0 6l12-1 3-2h15q2 0 2 2v21H0z" fill="#ffd35c" />
          <path d="M5 28V17q0-2 2-2h18q2 0 2 2v11h-5v-8H10v8z" fill="#3a96dd" />
        </Svg>
      </button>
      <button aria-label="Outlook" className={`${TASK} w-[76px]`}>
        <Svg w={34} h={34}>
          <path d="M2 14L16 1q2-1 4 0l14 11v19q0 2-2 2H8z" fill="#2aa8f2" />
          <path d="M4 13L16 2q2-1 4 0l5 4-18 13z" fill="#6ccbf8" />
          <path d="M7 19L26 6l8 6-18 14z" fill="#2b48cf" />
          <path d="M16 25l18-12v18q0 2-2 2h-8z" fill="#1d8df0" />
          <path d="M5 33l11-8q12 0 8 8z" fill="#42d3f7" />
          <rect y="15" width="15" height="15" rx="3" fill="#1263ce" />
          <circle cx="7.500" cy="22.500" r="4" stroke="#fff" strokeWidth="2" />
        </Svg>
      </button>
      <button aria-label="Firefox" className={`${TASK} ml-2 mr-[14px] w-[61px] border-b-[3px] border-[#76b9ed]`}>
        <svg width="34" height="36" viewBox="0 0 34 36" aria-hidden="true">
          <defs>
            <linearGradient id="fox" x1=".8" y1="0" x2=".2" y2="1"><stop stopColor="#fff04a" /><stop offset=".45" stopColor="#ff8a1c" /><stop offset="1" stopColor="#f5156c" /></linearGradient>
          </defs>
          <path d="M2 10l2-6 4 4q3-2 7-2Q17 2 22 0q0 5 5 8l1 4 2-4q8 12 1 21-6 7-14 7T3 29Q-2 20 2 10z" fill="url(#fox)" />
          <circle cx="17" cy="19" r="7.500" fill="#7a3fe0" />
          <path d="M4 14q6-3 12 0l4 1q-1 3-6 3-2 2-4 2 0 6 8 7-8 3-12-4-2-4-2-9z" fill="#ff8c22" />
        </svg>
      </button>
      <button aria-label="Telegram" className={`${TASK} mr-2 w-[61px] border-b-[3px] border-[#76b9ed]`}>
        <Svg w={38} h={38}>
          <circle cx="17" cy="17" r="16" fill="#2499d6" />
          <path d="M7 17l19-7-3 16-6-5-3 4-1-6 9-6-11 6z" fill="#fff" />
          <rect x="15" y="22" width="23" height="16" rx="6" fill="#858585" />
          <text x="17" y="35" fontSize="12" fill="#fff">..45</text>
        </Svg>
      </button>
      <button aria-label="Excel" className={`${TASK} w-[73px] border-b-[3px] border-[#76b9ed] bg-[#4b4b4b]`}>
        <ExcelLogo size={34} />
      </button>
      <button className="ml-auto flex items-center gap-3 whitespace-nowrap text-[20px]">
        <Svg w={36} h={36}>
          <path d="M14 12v18q0 4-3 4t-3-4" stroke="#8a8a8a" strokeWidth="2.500" />
          <path d="M0 20Q3 10 14 9q12 1 14 11l-5-2-4 3-5-3-5 3-4-3z" fill="#6cb5f2" />
          <path d="M14 9q-5 4-5 12l5-3 5 3q0-8-5-12z" fill="#a8d6f8" />
          <path d="M20 3l-2 4M26 0l-2 4M26 7l-2 4M33 6l-2 4M34 13l-2 4" stroke="#55a6ee" strokeWidth="2" strokeLinecap="round" />
        </Svg>
        Rainy days ahead
      </button>
      <button aria-label="Скрытые значки" className="ml-[37px]"><ChevronUp size={24} strokeWidth={1.5} /></button>
      <Svg w={20} h={24} className="ml-4">
        <rect x="2" y="6" width="10" height="12" rx="2" stroke="#fff" strokeWidth="1.300" />
        <path d="M12 11l5-3v8l-5-3M2 3q6-4 12 0M2 21q6 4 12 0" stroke="#fff" strokeWidth="1.300" />
      </Svg>
      <Svg w={26} h={18} className="ml-2.5">
        <path d="M6 5h17v11H6z" fill="#fff" stroke="#fff" />
        <path d="M25 8v5" stroke="#fff" strokeWidth="2" />
        <path d="M1 4h8v3q0 3-4 3T1 7zM3 0v4M7 0v4M5 10v3" fill="#222" stroke="#fff" strokeWidth="1.300" />
      </Svg>
      <Svg w={24} h={20} className="ml-2.5">
        <path d="M1 7h4l5-5v16l-5-5H1z" stroke="#fff" strokeWidth="1.400" />
        <path d="M13 7q2 3 0 6" stroke="#fff" strokeWidth="1.400" />
        <path d="M16 5q4 5 0 10M19 2q6 8 0 16" stroke="#888" strokeWidth="1.400" />
      </Svg>
      <Svg w={22} h={22} className="ml-3.5">
        <path d="M1 20Q3 4 19 2M5 20Q6 8 19 6M9 20q1-9 10-10M13 20q0-6 6-6" stroke="#ddd" strokeWidth="1.300" />
        <circle cx="17.500" cy="18.500" r="2" fill="#fff" />
      </Svg>
      <span className="ml-4 w-8 text-[17px]">РУС</span>
      <div className="ml-[18px] w-[100px] whitespace-nowrap text-center text-[17px] leading-7">20:12<br />17.11.2025</div>
      <button aria-label="Уведомления" className="relative ml-[22px] mr-[19px] h-11 w-9">
        <Svg w={24} h={28}>
          <path d="M0 0h24v20H14l-5 5-4-5H0z" fill="#fff" />
          <path d="M5 6h14M5 10h14M5 14h14" stroke="#222" strokeWidth="1.500" />
        </Svg>
        <span className="absolute bottom-0 right-0 flex h-6 w-6 items-center justify-center rounded-full border border-[#999] bg-[#333] text-[17px] font-semibold">4</span>
      </button>
      <div className="mr-[6px] h-full w-px bg-[#777]" />
    </footer>
  )
}

export default function App() {
  return (
    <div className="relative flex h-screen flex-col overflow-hidden bg-[#efefef] font-['Noto_Sans','Open_Sans',sans-serif]">
      <span className="absolute left-0 top-0 h-[2px] w-[2px] bg-[#e01010]" />
      <TitleBar />
      <MenuTabs />
      <Ribbon />
      <Sheet />
      <SheetTabs />
      <StatusBar />
      <Taskbar />
    </div>
  )
}
